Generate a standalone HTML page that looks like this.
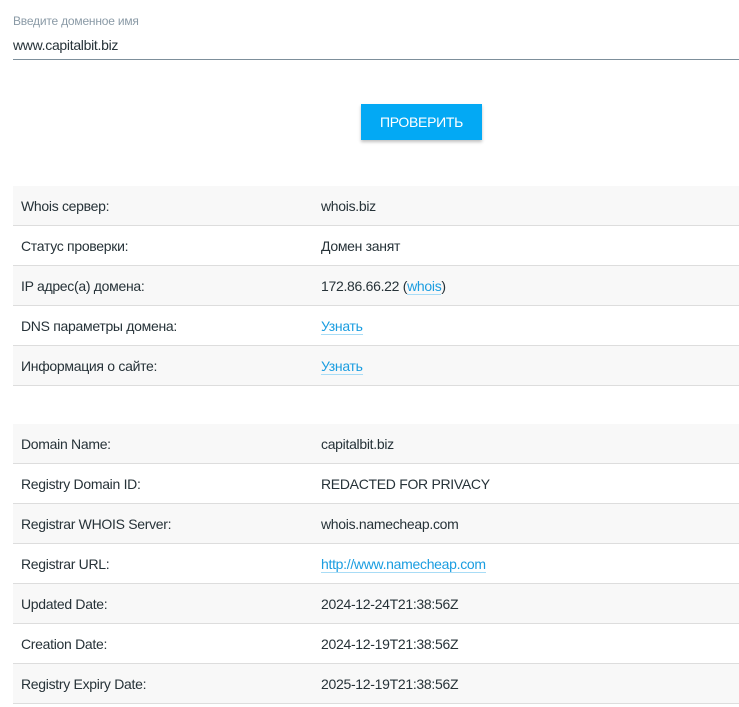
<!DOCTYPE html>
<html><head><meta charset="utf-8"><style>
body{margin:0;background:#fff;font-family:"Liberation Sans",sans-serif;color:#263238;width:739px;height:707px;overflow:hidden;position:relative}
.lbl{position:absolute;left:13px;top:14px;font-size:12px;color:#8a9aa6;letter-spacing:-0.2px}
.val{position:absolute;left:13px;top:37px;font-size:14px;color:#263238;letter-spacing:-0.3px}
.line{position:absolute;left:13px;top:59px;width:726px;height:1px;background:#7d8f9b}
.btn{position:absolute;left:361px;top:104px;width:121px;height:36px;background:#03a9f4;color:#fff;font-size:14px;line-height:36px;text-align:center;box-shadow:0 2px 3px rgba(0,0,0,.25);letter-spacing:-0.3px}
table{position:absolute;left:13px;width:726px;border-collapse:collapse;font-size:14px;letter-spacing:-0.3px}
td{height:39px;border-bottom:1px solid #ddd;padding:0 0 0 8px;vertical-align:middle}
td:first-child{width:292px}
tr.g td{background:#f8f8f8}
a{color:#1a9de0;text-decoration:none;border-bottom:1px solid #a8dcf6}
</style></head><body>
<div class="lbl">Введите доменное имя</div>
<div class="val">www.capitalbit.biz</div>
<div class="line"></div>
<div class="btn">ПРОВЕРИТЬ</div>
<table style="top:186px">
<tr class="g"><td>Whois сервер:</td><td>whois.biz</td></tr>
<tr><td>Статус проверки:</td><td>Домен занят</td></tr>
<tr class="g"><td>IP адрес(а) домена:</td><td>172.86.66.22 (<a>whois</a>)</td></tr>
<tr><td>DNS параметры домена:</td><td><a>Узнать</a></td></tr>
<tr class="g"><td>Информация о сайте:</td><td><a>Узнать</a></td></tr>
</table>
<table style="top:424px">
<tr class="g"><td>Domain Name:</td><td>capitalbit.biz</td></tr>
<tr><td>Registry Domain ID:</td><td>REDACTED FOR PRIVACY</td></tr>
<tr class="g"><td>Registrar WHOIS Server:</td><td>whois.namecheap.com</td></tr>
<tr><td>Registrar URL:</td><td><a>http://www.namecheap.com</a></td></tr>
<tr class="g"><td>Updated Date:</td><td>2024-12-24T21:38:56Z</td></tr>
<tr><td>Creation Date:</td><td>2024-12-19T21:38:56Z</td></tr>
<tr class="g"><td>Registry Expiry Date:</td><td>2025-12-19T21:38:56Z</td></tr>
</table>
</body></html>
